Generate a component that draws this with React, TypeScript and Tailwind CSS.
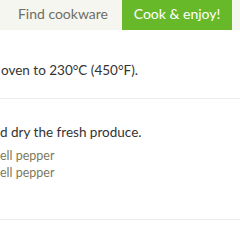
import React from 'react';

const items = ['ell pepper', 'ell pepper'];

const App: React.FC = () => {
  return (
    <div className="w-[240px] h-[240px] overflow-hidden bg-white font-['Lato',sans-serif]">
      <div className="flex h-[30px] bg-[#f6f6f1]">
        <div className="w-[122px] shrink-0 flex items-center justify-end pr-[14px] pb-[4px] text-[14px] text-[#6e6e64]">
          Find cookware
        </div>
        <div className="w-[110px] shrink-0 flex items-center justify-center pb-[4px] bg-[#67b92a] text-[14px] text-white">
          Cook &amp; enjoy!
        </div>
      </div>
      <div className="h-[69px] flex items-center border-b border-[#ececec]">
        <p className="pl-[1px] whitespace-nowrap text-[13.5px] text-[#333333] pt-[12px]">oven to 230°C (450°F).</p>
      </div>
      <div className="h-[121px] border-b border-[#ececec] pt-[23px]">
        <p className="whitespace-nowrap text-[13.5px] text-[#333333]">d dry the fresh produce.</p>
        <ul className="mt-[5px] flex flex-col">
          {items.map((item, i) => (
            <li key={i} className="whitespace-nowrap text-[12.5px] leading-[17px] text-[#7c7a5c]">
              {item}
            </li>
          ))}
        </ul>
      </div>
    </div>
  );
};

export default App;
